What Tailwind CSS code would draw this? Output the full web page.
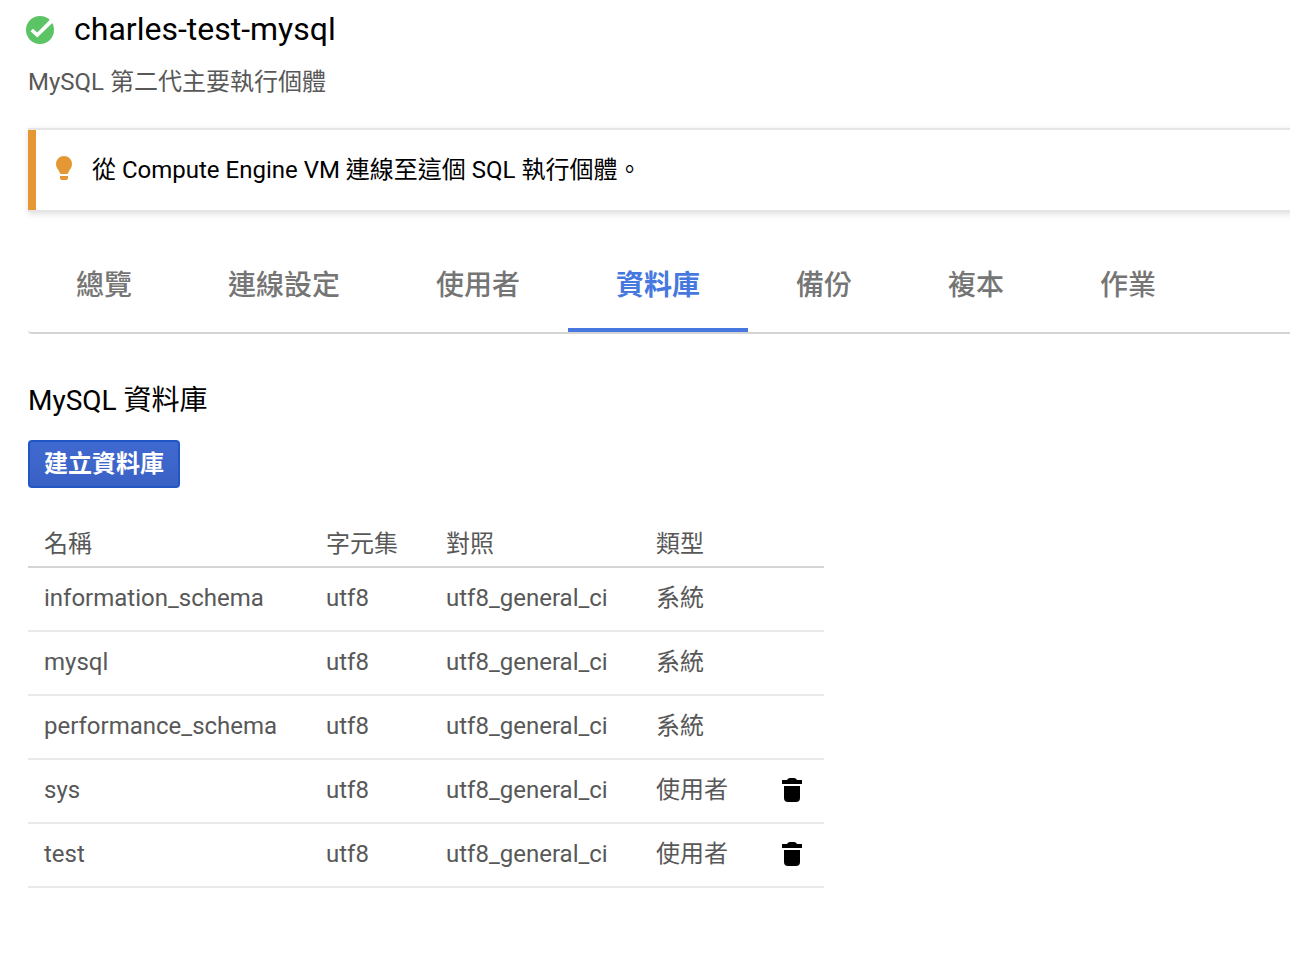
<!DOCTYPE html>
<html lang="zh-TW">
<head>
<meta charset="utf-8">
<title>charles-test-mysql</title>
<script src="https://cdn.jsdelivr.net/npm/@tailwindcss/browser@4"></script>
</head>
<body class="h-[964px] overflow-hidden bg-white pl-7 font-['Roboto','Noto_Sans_CJK_TC',sans-serif] text-black">
  <header>
    <div class="flex h-[60px] items-center">
      <svg class="-ml-0.5 h-7 w-7 shrink-0" viewBox="0 0 28 28"><circle cx="14" cy="14" r="14" fill="#5bc464"/><path d="M4.500 15.200L7 12.800l4.300 3.700L24.300 3.300l2.500 3.200L11.300 21.500z" fill="#fff"/></svg>
      <h1 class="ml-5 h-[60px] whitespace-nowrap text-[32px] leading-[58px]">charles-test-mysql</h1>
    </div>
    <p class="h-[68px] text-2xl leading-[44px] text-[#585858]">MySQL 第二代主要執行個體</p>
  </header>

  <section class="-mr-4 flex h-[84px] items-stretch border-y-2 border-[#e5e5e5] shadow-[0_2px_6px_rgba(0,0,0,0.13)]">
    <div class="w-2 bg-[#e49734]"></div>
    <div class="flex items-center">
      <svg class="mb-1 ml-5 h-6 w-4 shrink-0" viewBox="0 0 16 24" fill="#e49734"><path d="M8 0a8 8 0 0 0-8 8c0 3.200 1.700 5 3 7l.8 2.200q.4.8 1.200.8h6q.8 0 1.200-.8L13 15c1.300-2 3-3.800 3-7a8 8 0 0 0-8-8zM4 20h8v2a2 2 0 0 1-2 2H6a2 2 0 0 1-2-2z"/></svg>
      <p class="ml-5 whitespace-nowrap text-2xl leading-8">從 Compute Engine VM 連線至這個 SQL 執行個體。</p>
    </div>
  </section>

  <nav class="mt-6 flex h-[98px] rounded-bl border-b-2 border-[#d4d4d4] text-[28px] leading-[99px] font-medium text-[#757575]">
    <a class="px-12">總覽</a>
    <a class="px-12">連線設定</a>
    <a class="px-12">使用者</a>
    <a class="h-24 border-b-4 border-[#4678df] px-12 font-bold text-[#4678df]">資料庫</a>
    <a class="px-12">備份</a>
    <a class="px-12">複本</a>
    <a class="px-12">作業</a>
  </nav>

  <main>
    <h2 class="mt-[46px] h-10 text-[28px] leading-[42px]">MySQL 資料庫</h2>
    <button class="mt-5 flex h-12 w-[152px] items-center justify-center rounded-[4px] border-2 border-[#2157c5] bg-linear-to-b from-[#4069d0] to-[#3a62c5] text-2xl leading-none font-bold text-white">建立資料庫</button>

    <div class="mt-8 w-[796px] text-2xl text-[#585858]">
      <div class="grid h-12 grid-cols-[282px_120px_210px_126px_20px] border-b-2 border-[#d4d4d4] pl-4 leading-[48px]">
        <span>名稱</span><span>字元集</span><span>對照</span><span>類型</span>
      </div>
      <div class="grid h-16 grid-cols-[282px_120px_210px_126px_20px] border-b-2 border-[#e9e9e9] pl-4 leading-[60px]">
        <span>information_schema</span><span>utf8</span><span>utf8_general_ci</span><span>系統</span>
      </div>
      <div class="grid h-16 grid-cols-[282px_120px_210px_126px_20px] border-b-2 border-[#e9e9e9] pl-4 leading-[60px]">
        <span>mysql</span><span>utf8</span><span>utf8_general_ci</span><span>系統</span>
      </div>
      <div class="grid h-16 grid-cols-[282px_120px_210px_126px_20px] border-b-2 border-[#e9e9e9] pl-4 leading-[60px]">
        <span>performance_schema</span><span>utf8</span><span>utf8_general_ci</span><span>系統</span>
      </div>
      <div class="grid h-16 grid-cols-[282px_120px_210px_126px_20px] border-b-2 border-[#e9e9e9] pl-4 leading-[60px]">
        <span>sys</span><span>utf8</span><span>utf8_general_ci</span><span>使用者</span>
        <svg class="mt-[18px] h-6 w-5" viewBox="0 0 20 24" fill="#000"><path d="M0 2h5q1-2 3-2h4q2 0 3 2h5v4H0zM2 8h16v12a4 4 0 0 1-4 4H6a4 4 0 0 1-4-4z"/></svg>
      </div>
      <div class="grid h-16 grid-cols-[282px_120px_210px_126px_20px] border-b-2 border-[#e9e9e9] pl-4 leading-[60px]">
        <span>test</span><span>utf8</span><span>utf8_general_ci</span><span>使用者</span>
        <svg class="mt-[18px] h-6 w-5" viewBox="0 0 20 24" fill="#000"><path d="M0 2h5q1-2 3-2h4q2 0 3 2h5v4H0zM2 8h16v12a4 4 0 0 1-4 4H6a4 4 0 0 1-4-4z"/></svg>
      </div>
    </div>
  </main>
</body>
</html>
